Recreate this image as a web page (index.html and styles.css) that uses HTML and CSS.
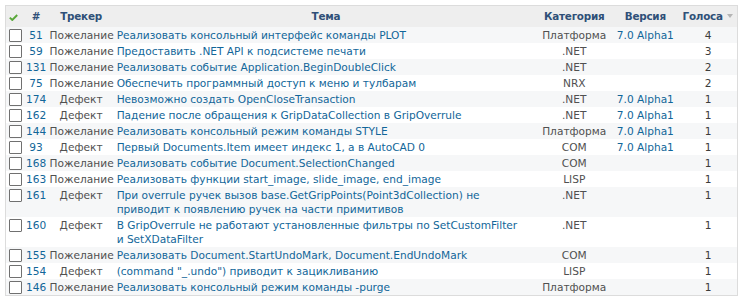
FILE: index.html
```html
<!DOCTYPE html>
<html lang="ru">
<head>
<meta charset="utf-8">
<title>Задачи</title>
<link rel="stylesheet" href="styles.css">
</head>
<body>
<table class="issues">
  <colgroup>
    <col class="c-check"><col class="c-id"><col class="c-tracker"><col class="c-subject"><col class="c-cat"><col class="c-ver"><col class="c-votes">
  </colgroup>
  <thead>
    <tr>
      <th class="check"><svg class="toggle" width="9" height="7" viewBox="0 0 9 7"><path d="M0.8 3.6 L3.3 6 L8.2 1" fill="none" stroke="#59a83a" stroke-width="1.9"/></svg></th>
      <th><a href="#">#</a></th>
      <th><a href="#">Трекер</a></th>
      <th><a href="#">Тема</a></th>
      <th><a href="#">Категория</a></th>
      <th><a href="#">Версия</a></th>
      <th class="votes-h"><a href="#">Голоса</a><span class="sort"></span></th>
    </tr>
  </thead>
  <tbody>
    <tr class="odd"><td><span class="cb"></span></td><td class="id"><a href="#">51</a></td><td class="tr">Пожелание</td><td class="subj"><a href="#">Реализовать консольный интерфейс команды PLOT</a></td><td class="cat">Платформа</td><td class="ver"><a href="#">7.0 Alpha1</a></td><td class="vt">4</td></tr>
    <tr><td><span class="cb"></span></td><td class="id"><a href="#">59</a></td><td class="tr">Пожелание</td><td class="subj"><a href="#">Предоставить .NET API к подсистеме печати</a></td><td class="cat">.NET</td><td class="ver"></td><td class="vt">3</td></tr>
    <tr class="odd"><td><span class="cb"></span></td><td class="id"><a href="#">131</a></td><td class="tr">Пожелание</td><td class="subj"><a href="#">Реализовать событие Application.BeginDoubleClick</a></td><td class="cat">.NET</td><td class="ver"></td><td class="vt">2</td></tr>
    <tr><td><span class="cb"></span></td><td class="id"><a href="#">75</a></td><td class="tr">Пожелание</td><td class="subj"><a href="#">Обеспечить программный доступ к меню и тулбарам</a></td><td class="cat">NRX</td><td class="ver"></td><td class="vt">2</td></tr>
    <tr class="odd"><td><span class="cb"></span></td><td class="id"><a href="#">174</a></td><td class="tr">Дефект</td><td class="subj"><a href="#">Невозможно создать OpenCloseTransaction</a></td><td class="cat">.NET</td><td class="ver"><a href="#">7.0 Alpha1</a></td><td class="vt">1</td></tr>
    <tr><td><span class="cb"></span></td><td class="id"><a href="#">162</a></td><td class="tr">Дефект</td><td class="subj"><a href="#">Падение после обращения к GripDataCollection в GripOverrule</a></td><td class="cat">.NET</td><td class="ver"><a href="#">7.0 Alpha1</a></td><td class="vt">1</td></tr>
    <tr class="odd"><td><span class="cb"></span></td><td class="id"><a href="#">144</a></td><td class="tr">Пожелание</td><td class="subj"><a href="#">Реализовать консольный режим команды STYLE</a></td><td class="cat">Платформа</td><td class="ver"><a href="#">7.0 Alpha1</a></td><td class="vt">1</td></tr>
    <tr><td><span class="cb"></span></td><td class="id"><a href="#">93</a></td><td class="tr">Дефект</td><td class="subj"><a href="#">Первый Documents.Item имеет индекс 1, а в AutoCAD 0</a></td><td class="cat">COM</td><td class="ver"><a href="#">7.0 Alpha1</a></td><td class="vt">1</td></tr>
    <tr class="odd"><td><span class="cb"></span></td><td class="id"><a href="#">168</a></td><td class="tr">Пожелание</td><td class="subj"><a href="#">Реализовать событие Document.SelectionChanged</a></td><td class="cat">COM</td><td class="ver"></td><td class="vt">1</td></tr>
    <tr><td><span class="cb"></span></td><td class="id"><a href="#">163</a></td><td class="tr">Пожелание</td><td class="subj"><a href="#">Реализовать функции start_image, slide_image, end_image</a></td><td class="cat">LISP</td><td class="ver"></td><td class="vt">1</td></tr>
    <tr class="odd"><td><span class="cb"></span></td><td class="id"><a href="#">161</a></td><td class="tr">Дефект</td><td class="subj"><a href="#">При overrule ручек вызов base.GetGripPoints(Point3dCollection) не приводит к появлению ручек на части примитивов</a></td><td class="cat">.NET</td><td class="ver"></td><td class="vt">1</td></tr>
    <tr><td><span class="cb"></span></td><td class="id"><a href="#">160</a></td><td class="tr">Дефект</td><td class="subj"><a href="#">В GripOverrule не работают установленные фильтры по SetCustomFilter и SetXDataFilter</a></td><td class="cat">.NET</td><td class="ver"></td><td class="vt">1</td></tr>
    <tr class="odd"><td><span class="cb"></span></td><td class="id"><a href="#">155</a></td><td class="tr">Пожелание</td><td class="subj"><a href="#">Реализовать Document.StartUndoMark, Document.EndUndoMark</a></td><td class="cat">COM</td><td class="ver"></td><td class="vt">1</td></tr>
    <tr><td><span class="cb"></span></td><td class="id"><a href="#">154</a></td><td class="tr">Дефект</td><td class="subj"><a href="#">(command "_.undo") приводит к зацикливанию</a></td><td class="cat">LISP</td><td class="ver"></td><td class="vt">1</td></tr>
    <tr class="odd"><td><span class="cb"></span></td><td class="id"><a href="#">146</a></td><td class="tr">Пожелание</td><td class="subj"><a href="#">Реализовать консольный режим команды -purge</a></td><td class="cat">Платформа</td><td class="ver"></td><td class="vt">1</td></tr>
  </tbody>
</table>
</body>
</html>
```
FILE: styles.css
```css
html, body {
  margin: 0;
  padding: 0;
  background: #fff;
}
body {
  padding: 5px 0 0 5px;
  font-family: "DejaVu Sans", Verdana, sans-serif;
  font-size: 10.6px;
  color: #505050;
}
a {
  color: #169;
  text-decoration: none;
}
.issues {
  border-collapse: collapse;
  table-layout: fixed;
  width: 733px;
  border: 1px solid #dcdcdc;
}
.c-check { width: 19px; }
.c-id { width: 23px; }
.c-tracker { width: 67px; }
.c-subject { width: 422px; }
.c-cat { width: 74px; }
.c-ver { width: 68px; }
.c-votes { width: 58px; }

.issues th {
  background: #eeeeee;
  padding: 4px 2px;
  line-height: 13px;
  font-size: 10.4px;
  letter-spacing: -0.25px;
  font-weight: bold;
  text-align: center;
  white-space: nowrap;
}
.issues th a {
  color: #2f5078;
}
.issues th.check {
  text-align: left;
  padding-left: 3px;
}
.toggle {
  display: block;
  margin-top: 1px;
}
.votes-h {
  position: relative;
  padding-right: 13px !important;
}
.sort {
  position: absolute;
  right: 4px;
  top: 8px;
  width: 0;
  height: 0;
  border-left: 3.5px solid transparent;
  border-right: 3.5px solid transparent;
  border-top: 4px solid #b5b5b5;
}
.issues td {
  padding: 1px 2px;
  line-height: 14px;
  vertical-align: top;
  text-align: center;
  white-space: nowrap;
}
.issues td.id {
  padding: 1px 0;
}
.issues tr.odd td {
  background: #f6f7f8;
}
.issues td.subj {
  text-align: left;
  white-space: normal;
  padding-right: 14px;
}
.cb {
  display: block;
  box-sizing: border-box;
  width: 13px;
  height: 13px;
  margin: 1px 0 0 1px;
  border: 1px solid #707070;
  border-radius: 1px;
  background: #fff;
}
.vt {
  color: #3c3c3c;
}
```
